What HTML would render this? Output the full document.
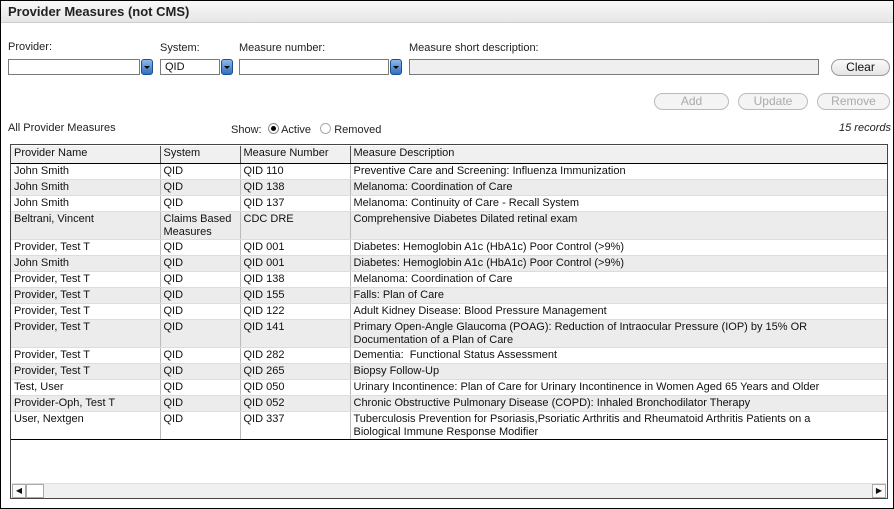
<!DOCTYPE html>
<html><head><style>
body{margin:0;width:894px;height:509px;overflow:hidden;font-family:"Liberation Sans",sans-serif;font-size:11px;color:#111;background:#fff}
.frame{position:absolute;left:0;top:0;width:892px;height:507px;border:1px solid #000;background:#fff}
.title{position:absolute;left:0;top:0;width:892px;height:22px;background:linear-gradient(#f8f8f8,#e6e6e6);border-bottom:1px solid #ccc;font-weight:bold;font-size:13px;line-height:22px;padding-left:7px;box-sizing:border-box;color:#222}
.lbl{position:absolute;font-size:11px;color:#222}
.inp{position:absolute;height:16px;border:1px solid #7a7a7a;background:#fff;box-sizing:border-box;font-size:11px;line-height:14px;padding-left:4px}
.dd{position:absolute;width:12px;height:16px;border-radius:3px;background:linear-gradient(#8fb8e8,#2f6fc0);border:1px solid #1d4f8f;box-sizing:border-box}
.dd:after{content:"";position:absolute;left:2px;top:6px;border-left:3px solid transparent;border-right:3px solid transparent;border-top:3px solid #000}
.btn{position:absolute;height:17px;border:1px solid #999;border-radius:9px;background:linear-gradient(#fafafa,#e4e4e4);box-sizing:border-box;text-align:center;font-size:12px;line-height:15px}
.dis{color:#aaa;border-color:#bbb;background:#f4f4f4}
.grid{position:absolute;left:9px;top:143px;width:878px;height:355px;border:1px solid #444;box-sizing:border-box;background:#fff;overflow:hidden}
table{border-collapse:collapse;position:absolute;left:0;top:1px;width:876px;table-layout:fixed}
td{padding:1px 3px 0;vertical-align:top;line-height:13px;height:16px;box-sizing:border-box;border-left:1px solid #bbb;overflow:hidden;white-space:nowrap}
td:first-child{border-left:none}
tr.h td{background:#f0f0f0;border-bottom:1px solid #000;height:17px;line-height:15px;padding-top:0;border-left:1px solid #555;font-size:11px}
tr.h td:first-child{border-left:none}
tr:nth-child(odd):not(.h) td{background:#ececec}
tr td{border-bottom:1px solid #ddd}
tr.last td{border-bottom:1px solid #000}
.sb{position:absolute;left:1px;top:338px;width:874px;height:15px;background:#f0f0f0;border-top:1px solid #ddd}
.sbb{position:absolute;top:0;width:14px;height:14px;background:#fafafa;border:1px solid #aaa;box-sizing:border-box;font-size:8px;line-height:12px;text-align:center}
</style></head><body>
<div class="frame">
<div class="title">Provider Measures (not CMS)</div>
<div class="lbl" style="left:7px;top:40px">Provider:</div>
<div class="lbl" style="left:159px;top:41px">System:</div>
<div class="lbl" style="left:238px;top:41px">Measure number:</div>
<div class="lbl" style="left:408px;top:41px">Measure short description:</div>
<div class="inp" style="left:7px;top:58px;width:132px"></div><div class="dd" style="left:140px;top:58px"></div>
<div class="inp" style="left:159px;top:58px;width:60px">QID</div><div class="dd" style="left:220px;top:58px"></div>
<div class="inp" style="left:238px;top:58px;width:150px"></div><div class="dd" style="left:389px;top:58px"></div>
<div class="inp" style="left:408px;top:58px;width:410px;background:#efefef"></div>
<div class="btn" style="left:830px;top:58px;width:59px">Clear</div>
<div class="btn dis" style="left:653px;top:92px;width:75px">Add</div>
<div class="btn dis" style="left:737px;top:92px;width:70px">Update</div>
<div class="btn dis" style="left:816px;top:92px;width:73px">Remove</div>
<div class="lbl" style="left:7px;top:121px">All Provider Measures</div>
<div class="lbl" style="left:230px;top:122px">Show: <span style="display:inline-block;width:9px;height:9px;border:1px solid #888;border-radius:50%;vertical-align:-1px;margin-left:3px;position:relative;background:#fff"><span style="position:absolute;left:2px;top:2px;width:5px;height:5px;border-radius:50%;background:#000"></span></span> Active &nbsp;<span style="display:inline-block;width:9px;height:9px;border:1px solid #aaa;border-radius:50%;vertical-align:-1px;margin-left:3px;background:#fff"></span> Removed</div>
<div class="lbl" style="left:838px;top:121px;font-style:italic">15 records</div>
<div class="grid">
<table>
<colgroup><col style="width:149px"><col style="width:80px"><col style="width:110px"><col></colgroup>
<tr class="h"><td>Provider Name</td><td>System</td><td>Measure Number</td><td>Measure Description</td></tr>
<tr><td>John Smith</td><td>QID</td><td>QID 110</td><td>Preventive Care and Screening: Influenza Immunization</td></tr>
<tr><td>John Smith</td><td>QID</td><td>QID 138</td><td>Melanoma: Coordination of Care</td></tr>
<tr><td>John Smith</td><td>QID</td><td>QID 137</td><td>Melanoma: Continuity of Care - Recall System</td></tr>
<tr><td style="height:26px">Beltrani, Vincent</td><td>Claims Based<br>Measures</td><td>CDC DRE</td><td>Comprehensive Diabetes Dilated retinal exam</td></tr>
<tr><td>Provider, Test T</td><td>QID</td><td>QID 001</td><td>Diabetes: Hemoglobin A1c (HbA1c) Poor Control (&gt;9%)</td></tr>
<tr><td>John Smith</td><td>QID</td><td>QID 001</td><td>Diabetes: Hemoglobin A1c (HbA1c) Poor Control (&gt;9%)</td></tr>
<tr><td>Provider, Test T</td><td>QID</td><td>QID 138</td><td>Melanoma: Coordination of Care</td></tr>
<tr><td>Provider, Test T</td><td>QID</td><td>QID 155</td><td>Falls: Plan of Care</td></tr>
<tr><td>Provider, Test T</td><td>QID</td><td>QID 122</td><td>Adult Kidney Disease: Blood Pressure Management</td></tr>
<tr><td style="height:28px">Provider, Test T</td><td>QID</td><td>QID 141</td><td>Primary Open-Angle Glaucoma (POAG): Reduction of Intraocular Pressure (IOP) by 15% OR<br>Documentation of a Plan of Care</td></tr>
<tr><td>Provider, Test T</td><td>QID</td><td>QID 282</td><td>Dementia:&nbsp; Functional Status Assessment</td></tr>
<tr><td>Provider, Test T</td><td>QID</td><td>QID 265</td><td>Biopsy Follow-Up</td></tr>
<tr><td>Test, User</td><td>QID</td><td>QID 050</td><td>Urinary Incontinence: Plan of Care for Urinary Incontinence in Women Aged 65 Years and Older</td></tr>
<tr><td>Provider-Oph, Test T</td><td>QID</td><td>QID 052</td><td>Chronic Obstructive Pulmonary Disease (COPD): Inhaled Bronchodilator Therapy</td></tr>
<tr class="last"><td style="height:28px">User, Nextgen</td><td>QID</td><td>QID 337</td><td>Tuberculosis Prevention for Psoriasis,Psoriatic Arthritis and Rheumatoid Arthritis Patients on a<br>Biological Immune Response Modifier</td></tr>
</table>
<div class="sb"><div class="sbb" style="left:0">&#9664;</div><div style="position:absolute;left:14px;top:0;width:18px;height:14px;background:#fff;border:1px solid #aaa;box-sizing:border-box"></div><div class="sbb" style="right:0">&#9654;</div></div>
</div>
</div>
</body></html>
